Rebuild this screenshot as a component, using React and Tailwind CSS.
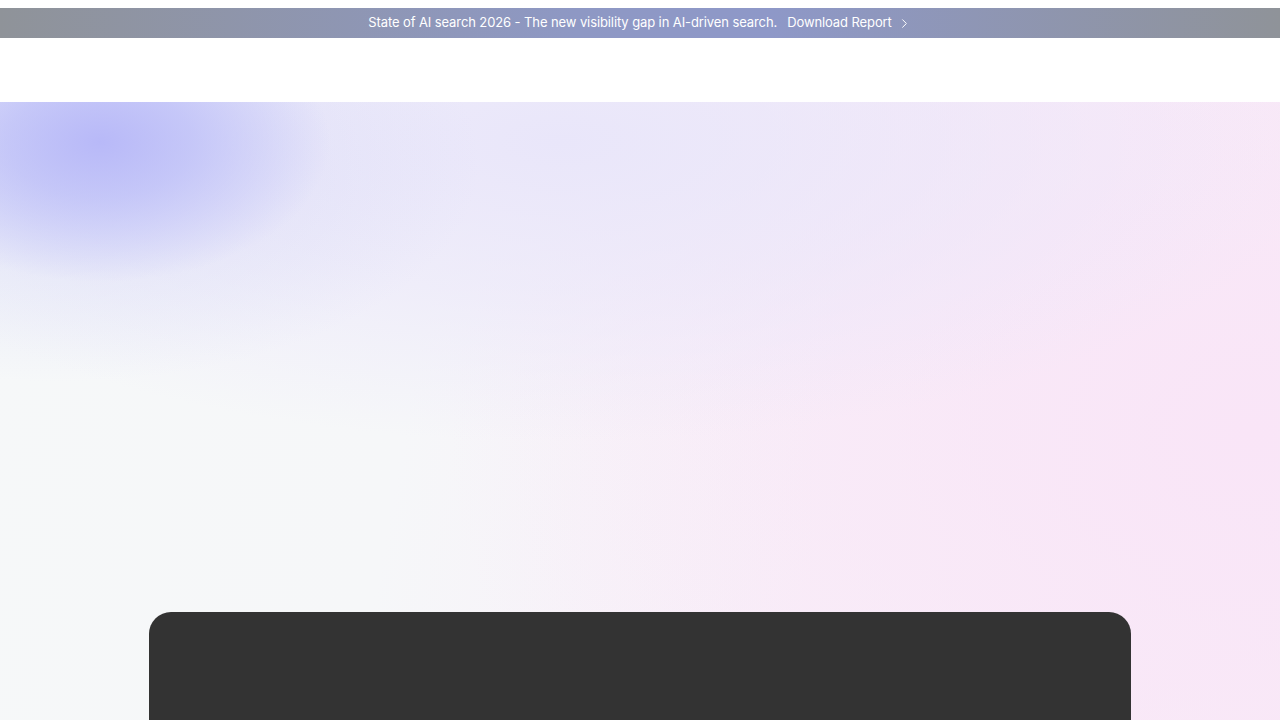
import React from 'react';
import { ChevronRight } from 'lucide-react';

export default function App() {
  return (
    <div className="min-h-screen bg-white" style={{ fontFamily: 'Inter, "Liberation Sans", sans-serif' }}>
      {/* Announcement bar */}
      <div className="pt-2 bg-white">
        <div className="h-[30px] flex items-center justify-center bg-[linear-gradient(to_right,#8f9399_0%,#8e98c4_45%,#8e98c8_60%,#8f9399_100%)] text-white text-[13px] tracking-[-0.1px]">
          <span>State of AI search 2026 - The new visibility gap in AI-driven search.</span>
          <a href="#" className="ml-[10px] flex items-center gap-[5px]">
            Download Report
            <ChevronRight size={15} strokeWidth={1.6} />
          </a>
        </div>
      </div>

      {/* Nav */}
      <div className="h-[64px] bg-white" />

      {/* Hero */}
      <div className="pt-[510px] flex justify-center bg-[radial-gradient(ellipse_230px_140px_at_100px_40px,#b8b9f8_0%,rgba(188,190,248,0.75)_40%,transparent_100%),radial-gradient(ellipse_420px_220px_at_60px_60px,rgba(200,204,246,0.5)_0%,transparent_100%),radial-gradient(ellipse_760px_300px_at_560px_40px,#e9e6fa_0%,rgba(234,230,250,0.6)_50%,transparent_100%),radial-gradient(ellipse_800px_600px_at_1250px_330px,#f9e5f7_0%,rgba(249,230,247,0.5)_50%,transparent_100%),linear-gradient(100deg,#f6f8f9_0%,#f6f7f9_32%,#f8eef8_62%,#f8e9f7_100%)]">
        <div className="w-[982px] h-[400px] bg-[#333333] rounded-[22px]" />
      </div>
    </div>
  );
}
